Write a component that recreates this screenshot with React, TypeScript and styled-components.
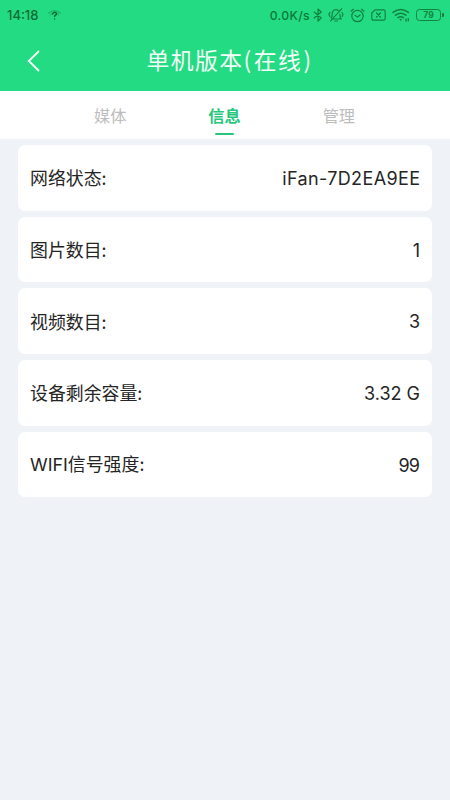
import React from "react";
import styled, { createGlobalStyle } from "styled-components";

const GlobalStyle = createGlobalStyle`
  * { box-sizing: border-box; }
  body { margin: 0; background: #eff3f8; }
`;

const Screen = styled.div`
  min-height: 800px;
  background: #eff3f8;
  color: #252525;
  font-family: Inter, "Noto Sans CJK SC", sans-serif;
`;

const Header = styled.header`
  height: 91px;
  background: #23db82;
`;

const StatusBar = styled.div`
  height: 30px;
  display: flex;
  align-items: center;
  justify-content: space-between;
  padding: 0 6px 0 7px;
  color: #12833f;
`;

const StatusGroup = styled.div`
  display: flex;
  align-items: center;
  height: 30px;
`;

const Clock = styled.span`
  width: 41px;
  font-size: 13px;
  font-weight: 500;
  color: #096b31;
  white-space: nowrap;
`;

const Speed = styled.span`
  font-size: 12.2px;
  line-height: 16px;
  padding-top: 1px;
  letter-spacing: 0.35px;
  font-weight: 500;
  color: #0b7838;
  white-space: nowrap;
`;

const StatusIcon = styled.svg<{ $gap?: number }>`
  display: block;
  flex: none;
  margin-left: ${({ $gap = 0 }) => $gap}px;
  fill: none;
  stroke: currentColor;
  stroke-width: 1.2;
  stroke-linecap: round;
  stroke-linejoin: round;
`;

const Battery = styled.div`
  position: relative;
  width: 25px;
  height: 12px;
  margin-left: 6px;
  margin-right: 3px;
  border: 1.5px solid currentColor;
  border-radius: 3.5px;
  display: flex;
  align-items: center;
  justify-content: center;
  font-size: 8.5px;
  font-weight: 700;
  line-height: 9px;

  &::after {
    content: "";
    position: absolute;
    right: -3.5px;
    top: 2.5px;
    width: 1.5px;
    height: 4px;
    background: currentColor;
    border-radius: 0 1px 1px 0;
  }
`;

const TitleBar = styled.div`
  height: 61px;
  display: grid;
  grid-template-columns: 68px 1fr 68px;
  align-items: center;
`;

const BackButton = styled.button`
  width: 68px;
  height: 61px;
  padding: 0 0 0 27px;
  border: 0;
  background: none;
  display: flex;
  align-items: center;
`;

const Title = styled.h1`
  margin: 0;
  padding: 0 0 1px 9px;
  text-align: center;
  color: #f5fff9;
  font-family: "Noto Sans CJK SC", sans-serif;
  font-size: 22.8px;
  font-weight: 400;
  letter-spacing: 1.5px;
  line-height: 34px;
  white-space: nowrap;
`;

const Parenthesis = styled.span`
  letter-spacing: 2.5px;
`;

const Tabs = styled.nav`
  height: 48px;
  padding: 0 54px 0 53px;
  display: grid;
  grid-template-columns: repeat(3, 1fr);
  background: #fff;
`;

const Tab = styled.button<{ $active?: boolean }>`
  display: flex;
  flex-direction: column;
  align-items: center;
  padding: 11px 0 0;
  border: 0;
  background: none;
  font-family: "Noto Sans CJK SC", sans-serif;
  font-size: 16.2px;
  line-height: 26px;
  font-weight: ${({ $active }) => ($active ? 700 : 400)};
  color: ${({ $active }) => ($active ? "#26c77c" : "#bdbdbd")};

  &::after {
    content: "";
    width: 19px;
    height: 2px;
    margin-top: 4.5px;
    border-radius: 1px;
    background: ${({ $active }) => ($active ? "#26c77c" : "transparent")};
  }
`;

const InfoList = styled.main`
  display: flex;
  flex-direction: column;
  gap: 6px;
  padding: 6px 18px;
`;

const InfoCard = styled.section`
  height: 65.7px;
  padding: 0 12px;
  display: flex;
  align-items: center;
  justify-content: space-between;
  background: #fff;
  border-radius: 7px;
`;

const Label = styled.span`
  font-family: "Noto Sans CJK SC", sans-serif;
  font-size: 17.9px;
  line-height: 26px;
  padding-bottom: 1px;
`;

const Latin = styled.span`
  font-family: Inter, sans-serif;
`;

const Value = styled.span<{ $spacing?: number }>`
  font-size: 18px;
  line-height: 26px;
  padding-top: 2px;
  letter-spacing: ${({ $spacing = 0 }) => $spacing}px;
  margin-right: ${({ $spacing = 0 }) => -$spacing}px;
  white-space: pre;
`;

const rows = [
  { latin: "", label: "网络状态:", value: "iFan-7D2EA9EE", spacing: 0.37 },
  { latin: "", label: "图片数目:", value: "1", spacing: 0 },
  { latin: "", label: "视频数目:", value: "3", spacing: 0 },
  { latin: "", label: "设备剩余容量:", value: "3.32 G", spacing: 0 },
  { latin: "WIFI", label: "信号强度:", value: "99", spacing: -0.8 },
];

const tabs = ["媒体", "信息", "管理"];

const UnknownWifi = () => (
  <StatusIcon width="13" height="12" viewBox="0 0 13 12">
    <path d="M.7 4Q6.5-.8 12.3 4M2.6 5.8Q3.2 5 4 4.7M9.2 4.7q.8.4 1.3 1.1" opacity=".45" />
    <path d="M4.8 4.9c0-2.1 3.6-2 3.6 0 0 1.4-1.8 1.2-1.8 2.5M6.6 9.9v.1" stroke="#096b31" strokeWidth="1.5" />
  </StatusIcon>
);

const Bluetooth = () => (
  <StatusIcon $gap={3} width="10" height="14" viewBox="0 0 10 14">
    <path d="m1.2 4 7 6L5 13V1l3.2 3-7 6" />
  </StatusIcon>
);

const MutedBell = () => (
  <StatusIcon $gap={5} width="16" height="14" viewBox="0 0 16 14">
    <path d="M5 11h8.2c-1.2-1-1.3-2.2-1.3-4.8M10.3 2.5C7.5.4 4.2 2.4 4.2 5.7c0 2.6 0 3.6-1 4.5M6.8 13h2.6M13.6.8l-11 12M1.9 4.3.9 6.5l1 2M14.1 4.6l.9 2-.9 1.8" />
  </StatusIcon>
);

const Alarm = () => (
  <StatusIcon $gap={6} width="15" height="15" viewBox="0 0 15 15">
    <circle cx="7.5" cy="8" r="5.7" />
    <path d="M1 3.2 3.3 1.2M11.7 1.2 14 3.2M4.9 7.1l2.5 2 2.8-2" />
  </StatusIcon>
);

const MissingSim = () => (
  <StatusIcon $gap={6} width="15" height="12" viewBox="0 0 15 12">
    <path d="M4 .8h8.5q1.7 0 1.7 1.7v7q0 1.7-1.7 1.7h-10Q.8 11.2.8 9.5V4ZM5.5 4l4 4M9.5 4l-4 4" />
  </StatusIcon>
);

const Wifi = () => (
  <StatusIcon $gap={6} width="18" height="14" viewBox="0 0 18 14">
    <path d="M1 4.4Q8.7 -1.6 16.4 4.4M3.5 7.2q5.2-4 10.4 0M6 9.7q2.7-1.8 5.4 0" strokeWidth="1.5" />
    <path d="M8.7 10.7 7.4 11.5l1.3 1.4 1.3-1.4Z" fill="currentColor" stroke="none" />
    <path d="M14 11v2.2M16.3 10.6v2.2" strokeWidth="1.3" />
  </StatusIcon>
);

export default function App() {
  return (
    <Screen>
      <GlobalStyle />
      <Header>
        <StatusBar>
          <StatusGroup>
            <Clock>14:18</Clock>
            <UnknownWifi />
          </StatusGroup>
          <StatusGroup>
            <Speed>0.0K/s</Speed>
            <Bluetooth />
            <MutedBell />
            <Alarm />
            <MissingSim />
            <Wifi />
            <Battery>79</Battery>
          </StatusGroup>
        </StatusBar>
        <TitleBar>
          <BackButton aria-label="返回">
            <svg width="14" height="22" viewBox="0 0 14 22" fill="none" stroke="#f5fff9" strokeWidth="1.9">
              <path d="M12 1 1.8 11 12 21" />
            </svg>
          </BackButton>
          <Title>
            单机版本<Parenthesis>(</Parenthesis>在<Parenthesis>线</Parenthesis>)
          </Title>
        </TitleBar>
      </Header>
      <Tabs>
        {tabs.map((tab) => (
          <Tab key={tab} $active={tab === "信息"}>
            {tab}
          </Tab>
        ))}
      </Tabs>
      <InfoList>
        {rows.map((row) => (
          <InfoCard key={row.label}>
            <Label>
              {row.latin && <Latin>{row.latin}</Latin>}
              {row.label}
            </Label>
            <Value $spacing={row.spacing}>{row.value}</Value>
          </InfoCard>
        ))}
      </InfoList>
    </Screen>
  );
}
